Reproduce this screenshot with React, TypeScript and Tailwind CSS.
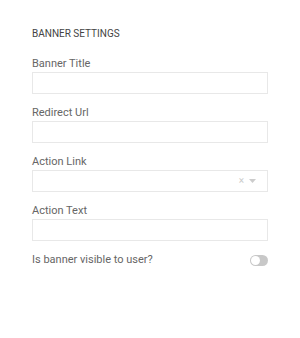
import { ReactNode } from "react";

function Field({ label, children }: { label: string; children: ReactNode }) {
  return (
    <div className="flex flex-col gap-[1px]">
      <label className="text-[11px] leading-[14px] text-[#666]">{label}</label>
      {children}
    </div>
  );
}

function TextInput() {
  return (
    <input
      type="text"
      className="h-[22px] w-full border border-[#e8e8e8] bg-white px-2 text-[11px] outline-none"
    />
  );
}

export default function App() {
  return (
    <div
      className="h-[338px] w-[300px] bg-white px-[32px] pt-[27px]"
      style={{ fontFamily: "Roboto, 'Liberation Sans', sans-serif" }}
    >
      <div className="w-[236px]">
        <p className="text-[10px] leading-[14px] text-[#444]">BANNER SETTINGS</p>

        <div className="mt-[16px] flex flex-col gap-[12px]">
          <Field label="Banner Title">
            <TextInput />
          </Field>
          <Field label="Redirect Url">
            <TextInput />
          </Field>
          <Field label="Action Link">
            <div className="flex h-[22px] w-full items-center justify-end gap-[5px] border border-[#e8e8e8] bg-white pr-[11px]">
              <span className="text-[10px] leading-none text-[#ccc]">×</span>
              <svg width="7" height="4" viewBox="0 0 7 4">
                <path d="M0 0h7L3.5 4z" fill="#ccc" />
              </svg>
            </div>
          </Field>
          <Field label="Action Text">
            <TextInput />
          </Field>
        </div>

        <div className="mt-[12px] flex items-center justify-between">
          <span className="text-[11px] leading-[14px] text-[#666]">
            Is banner visible to user?
          </span>
          <div className="flex h-[11px] w-[18px] items-center rounded-full bg-[#c8c8c8] px-[1px]">
            <div className="h-[9px] w-[9px] rounded-full bg-white" />
          </div>
        </div>
      </div>
    </div>
  );
}
